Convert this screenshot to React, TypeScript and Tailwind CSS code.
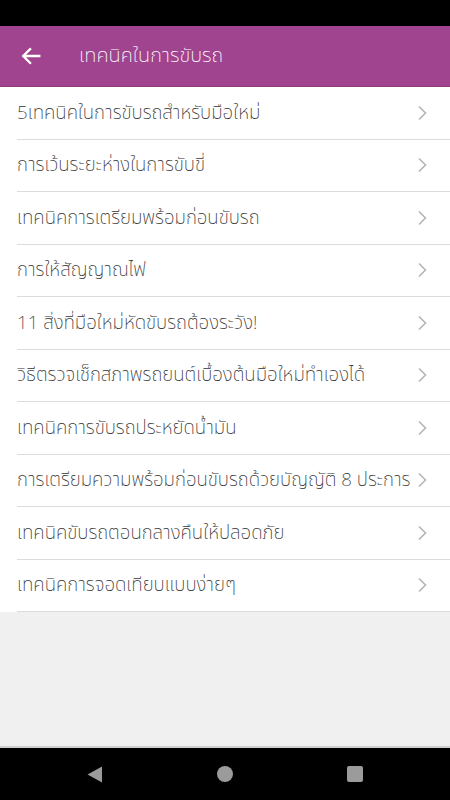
const items = [
  "5เทคนิคในการขับรถสำหรับมือใหม่",
  "การเว้นระยะห่างในการขับขี่",
  "เทคนิคการเตรียมพร้อมก่อนขับรถ",
  "การให้สัญญาณไฟ",
  "11 สิ่งที่มือใหม่หัดขับรถต้องระวัง!",
  "วิธีตรวจเช็กสภาพรถยนต์เบื้องต้นมือใหม่ทำเองได้",
  "เทคนิคการขับรถประหยัดน้ำมัน",
  "การเตรียมความพร้อมก่อนขับรถด้วยบัญญัติ 8 ประการ",
  "เทคนิคขับรถตอนกลางคืนให้ปลอดภัย",
  "เทคนิคการจอดเทียบแบบง่ายๆ",
];

const font = { fontFamily: '"Noto Sans Thai", "Noto Sans", "Liberation Sans", sans-serif' };

export default function App() {
  return (
    <div className="flex h-[800px] w-[450px] flex-col bg-[#f0f0f0]" style={font}>
      <div className="h-[26px] bg-black" />
      <header className="flex h-[61px] items-center border-b border-[#8e3a7f] bg-[#a0448f] text-white">
        <svg className="ml-[20px] h-[22px] w-[22px]" viewBox="0 0 24 24" fill="none" stroke="white" strokeWidth="2.6" strokeLinecap="square">
          <path d="M21 12H4M11 4.5 3.5 12l7.5 7.5" />
        </svg>
        <h1 className="ml-[37px] text-[20px] font-extralight">เทคนิคในการขับรถ</h1>
      </header>
      <ul className="bg-white">
        {items.map((t) => (
          <li key={t} className="ml-[17px] flex h-[52.5px] items-center border-b border-[#dcdcdc] pr-[23px]">
            <span className="flex-1 truncate text-[18.7px] font-extralight text-[#333]">{t}</span>
            <svg className="h-[16px] w-[10px]" viewBox="0 0 10 16" fill="none" stroke="#b5b5b5" strokeWidth="1.6">
              <path d="M2 1.5 8.5 8 2 14.5" />
            </svg>
          </li>
        ))}
      </ul>
      <div className="flex-1 border-b-2 border-[#cfcfcf]" />
      <nav className="flex h-[52px] items-center justify-center gap-[114px] bg-black">
        <svg className="h-[17px] w-[16px]" viewBox="0 0 16 17">
          <path d="M15 0.5 0.5 8.5 15 16.5Z" fill="#9b9b9b" />
        </svg>
        <div className="h-[16px] w-[16px] rounded-full bg-[#9b9b9b]" />
        <div className="h-[16px] w-[16px] rounded-[2px] bg-[#9b9b9b]" />
      </nav>
    </div>
  );
}
